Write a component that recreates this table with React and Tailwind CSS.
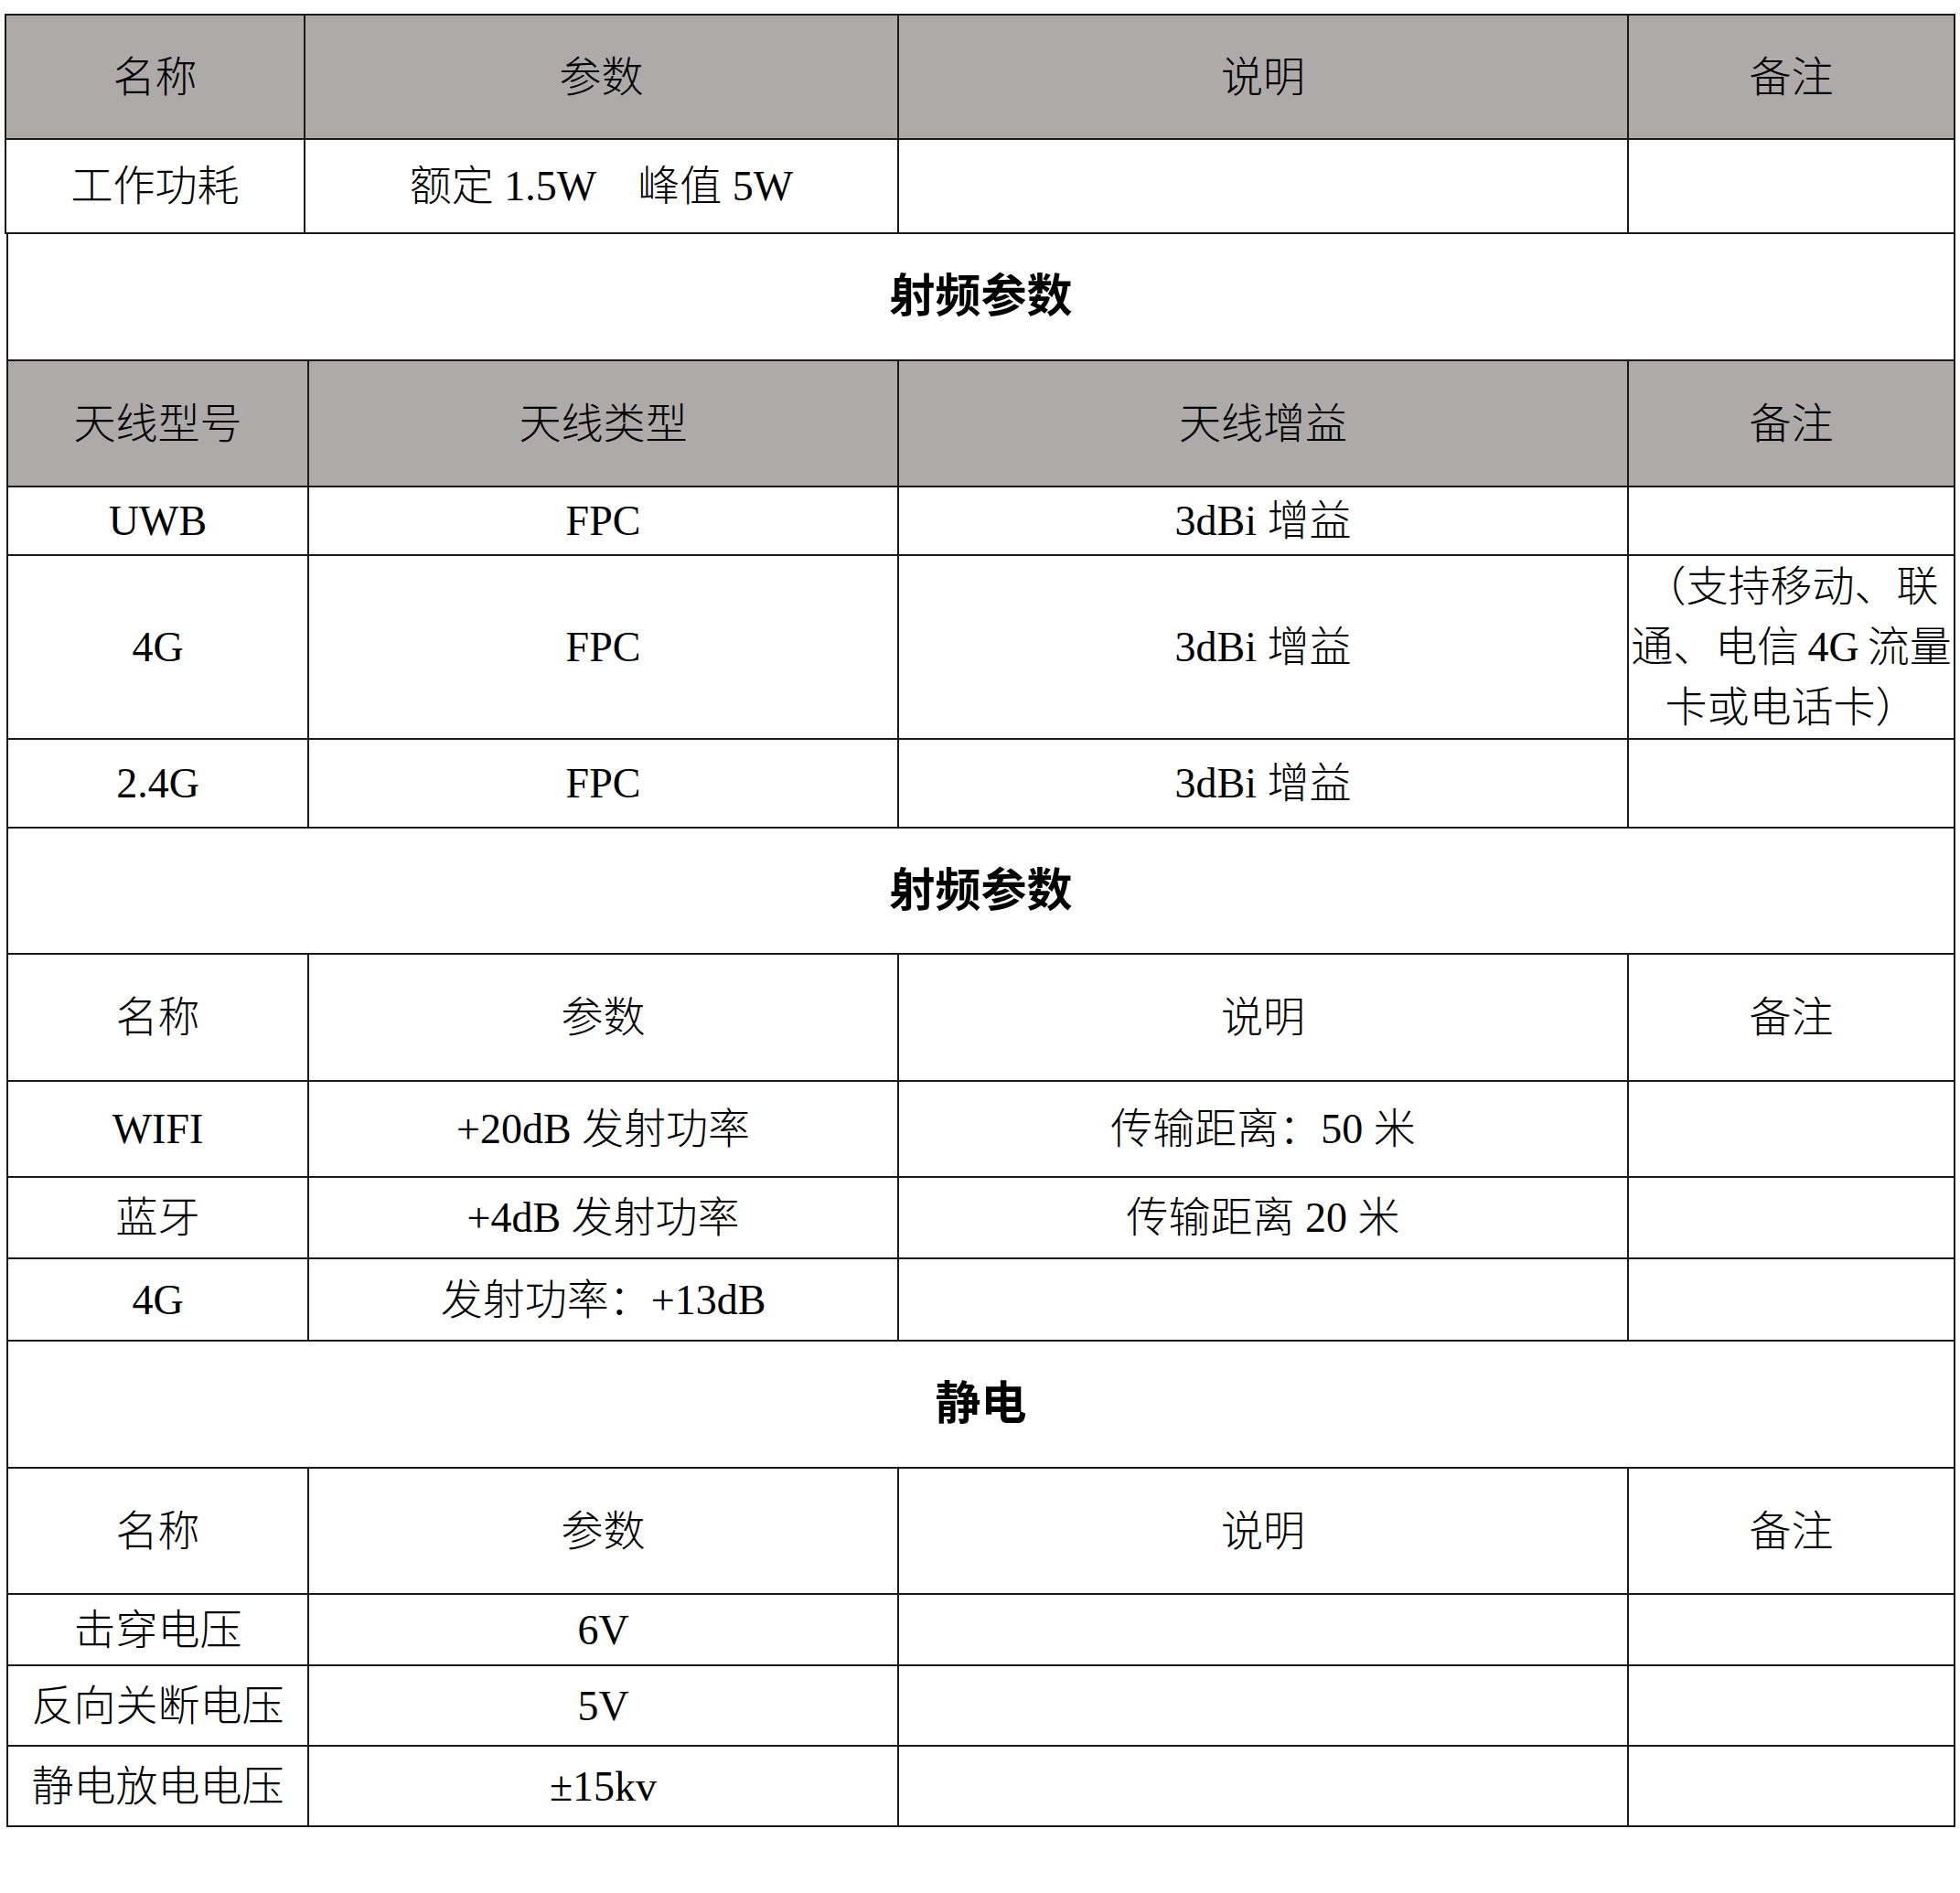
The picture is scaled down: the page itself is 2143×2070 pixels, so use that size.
import React from 'react';

const Cell = ({ children, className = '' }) => (
  <div className={`flex items-center justify-center border-r-2 border-b-2 border-[#1a1a1a] text-center ${className}`}>
    {children}
  </div>
);

const Row = ({ cells, height, gray, first }) => (
  <div
    className={`grid ${first ? 'grid-cols-[327px_649px_798px_357px]' : 'grid-cols-[329px_645px_798px_357px]'} overflow-hidden ${gray ? 'bg-[#aeaaaa]' : 'bg-white'}`}
    style={{ height }}
  >
    {cells.map((c, i) => (
      <Cell key={i}>{c}</Cell>
    ))}
  </div>
);

const Section = ({ title, height }) => (
  <div className="flex items-center justify-center border-r-2 border-b-2 border-[#1a1a1a] font-bold text-[50px]" style={{ height }}>
    {title}
  </div>
);

const App = () => {
  return (
    <div className="min-h-screen w-[2143px] bg-white pt-[15px] text-black text-[46px] font-light font-['Liberation_Serif','Noto_Sans_CJK_SC',serif]">
      {/* top table */}
      <div className="ml-[5px] w-[2133px] border-l-2 border-t-2 border-[#1a1a1a]">
        <Row first gray height={136} cells={['名称', '参数', '说明', '备注']} />
        <Row first height={103} cells={['工作功耗', <span>额定 1.5W{'\u3000'}峰值 5W</span>, '', '']} />
      </div>

      {/* the rest */}
      <div className="ml-[7px] w-[2131px] border-l-2 border-[#1a1a1a]">
        <Section title="射频参数" height={139} />
        <Row gray height={138} cells={['天线型号', '天线类型', '天线增益', '备注']} />
        <Row height={75} cells={['UWB', 'FPC', '3dBi 增益', '']} />
        <Row
          height={201}
          cells={[
            '4G',
            'FPC',
            '3dBi 增益',
            <span className="block whitespace-nowrap leading-[66px]">
              （支持移动、联
              <br />
              通、电信{'\u2009'}4G{'\u2009'}流量
              <br />
              卡或电话卡）
            </span>,
          ]}
        />
        <Row height={97} cells={['2.4G', 'FPC', '3dBi 增益', '']} />

        <Section title="射频参数" height={138} />
        <Row height={139} cells={['名称', '参数', '说明', '备注']} />
        <Row height={105} cells={['WIFI', '+20dB 发射功率', '传输距离：50 米', '']} />
        <Row height={89} cells={['蓝牙', '+4dB 发射功率', '传输距离 20 米', '']} />
        <Row height={90} cells={['4G', '发射功率：+13dB', '', '']} />

        <Section title="静电" height={139} />
        <Row height={138} cells={['名称', '参数', '说明', '备注']} />
        <Row height={78} cells={['击穿电压', '6V', '', '']} />
        <Row height={88} cells={['反向关断电压', '5V', '', '']} />
        <Row height={88} cells={['静电放电电压', '±15kv', '', '']} />
      </div>
    </div>
  );
};

export default App;
